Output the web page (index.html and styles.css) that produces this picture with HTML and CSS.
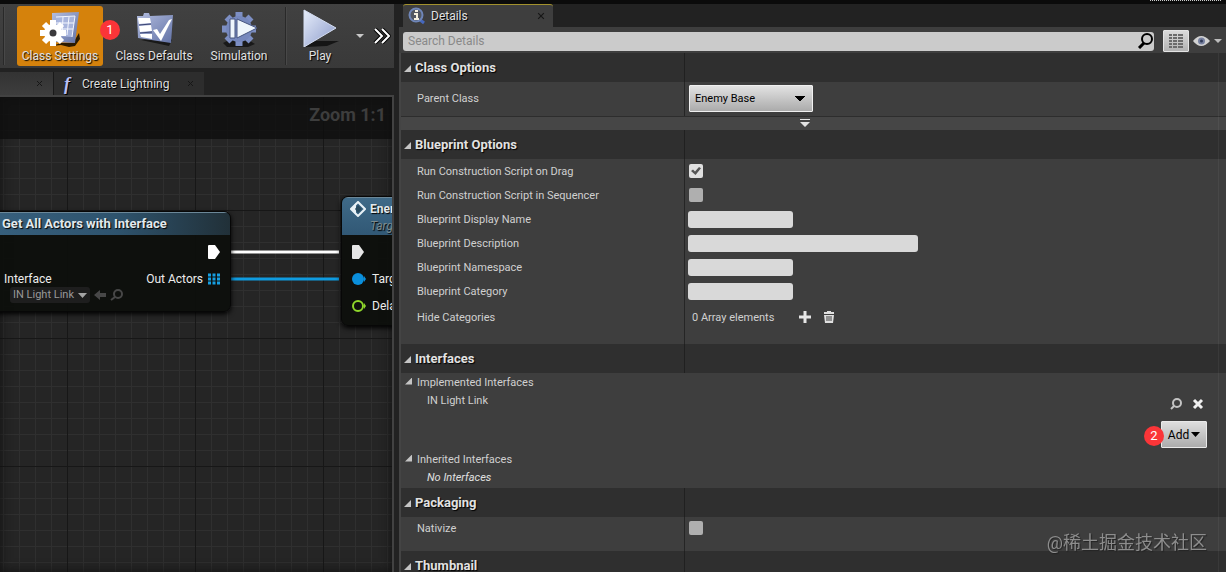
FILE: index.html
```html
<!DOCTYPE html>
<html lang="en">
<head>
    <meta charset="UTF-8">
    <meta name="viewport" content="width=device-width, initial-scale=1.0">
    <title>Blueprint Editor</title>
    <link rel="stylesheet" href="styles.css">
</head>
<body>
    <div class="editor">
        <main class="workspace">
            <div class="toolbar">
                <span class="divider first"></span>
                <button type="button" class="tool active">
                    <svg width="42" height="38" viewBox="0 0 42 38">
                        <defs>
                            <linearGradient id="steel" x1="0" y1="0" x2="1" y2="1">
                                <stop offset="0" stop-color="#e6edfa"/>
                                <stop offset="1" stop-color="#8b9aca"/>
                            </linearGradient>
                            <linearGradient id="card" x1="0" y1="0" x2="1" y2="1">
                                <stop offset="0" stop-color="#b3bddf"/>
                                <stop offset="1" stop-color="#6272a6"/>
                            </linearGradient>
                        </defs>
                        <path d="M13 37l9-3 12 0 6-10 1 6-5 7-6 1-8-2z" fill="#2b1a00"/>
                        <path d="M13 4l27-1-4 31-23-1z" fill="url(#card)"/>
                        <path d="M17 8l19-1-3 21-14-1z" fill="#a8b5dd"/>
                        <path d="M17 8l19-1-3 21M24 8l-1 18M30 8l-2 18M17 14h18M22 20h12" fill="none" stroke="#f4f7ff"/>
                        <path d="M14 11v26M1 24h26M5 15l18 18M23 15L5 33" stroke="#fff" stroke-width="6"/>
                        <circle cx="14" cy="24" r="9" fill="#fff"/>
                        <circle cx="14" cy="24" r="3.5" fill="#3b3a3c"/>
                    </svg>
                    <span>Class Settings</span>
                </button>
                <button type="button" class="tool">
                    <svg width="42" height="38" viewBox="0 0 42 38">
                        <path d="M8 31l28 6 3-6-4-4z" fill="#191919"/>
                        <path d="M4 7h6l1-3h5l1 3 23-1-2 28-33-5z" fill="url(#card)"/>
                        <path d="M5 9h12l1 5-12 1zM6 17l12-1 1 6-12 1zM7 25h12v5l-11-2z" fill="#fff"/>
                        <path d="M6 16l12-1M7 24l12-1" stroke="#3c4674"/>
                        <path d="M20 21l4-1 3 5 9-14 3-1-11 22z" fill="#fff"/>
                    </svg>
                    <span>Class Defaults</span>
                </button>
                <button type="button" class="tool narrow">
                    <svg width="42" height="38" viewBox="0 0 42 38">
                        <path d="M5 34l10-5 14 1 8 5-7 3H9z" fill="#191919"/>
                        <path d="M21 3v34M4 20h34M9 8l24 24M33 8L9 32" stroke="#7d8fc4" stroke-width="7"/>
                        <circle cx="21" cy="20" r="13" fill="#7688bd"/>
                        <path d="M12 10h5v19h-5zM19 10l20 9-20 10z" fill="#eef5fc" stroke="#46547f"/>
                    </svg>
                    <span>Simulation</span>
                </button>
                <span class="divider"></span>
                <button type="button" class="tool play">
                    <svg width="42" height="38" viewBox="0 0 42 38">
                        <path d="M6 38l8-6h26l-12 5z" fill="#151515"/>
                        <path d="M5 1l32 18L5 38z" fill="url(#steel)" stroke="#d5def2"/>
                    </svg>
                    <span>Play</span>
                </button>
                <button type="button" class="icon-button caret" aria-label="Play options">
                    <svg width="10" height="6" viewBox="0 0 10 6"><path d="M1 1h8L5 5z" fill="#c8c8c8"/></svg>
                </button>
                <button type="button" class="icon-button" aria-label="More tools">
                    <svg width="18" height="16" viewBox="0 0 18 16"><path d="M2 1l7 7-7 7M9 1l7 7-7 7" fill="none" stroke="#000" stroke-width="4"/><path d="M2 1l7 7-7 7M9 1l7 7-7 7" fill="none" stroke="#fff" stroke-width="2"/></svg>
                </button>
                <span class="badge badge-one">1</span>
            </div>

            <div class="graph-tabs">
                <div class="graph-tab current">
                    <svg class="close" width="7" height="7" viewBox="0 0 7 7"><path d="M1 1l5 5M6 1L1 6"/></svg>
                </div>
                <div class="graph-tab">
                    <span class="function-icon">f</span>
                    <span class="graph-tab-name">Create Lightning</span>
                    <svg class="close" width="7" height="7" viewBox="0 0 7 7"><path d="M1 1l5 5M6 1L1 6"/></svg>
                </div>
            </div>

            <div class="graph">
                <div class="graph-title">Zoom 1:1</div>

                <svg class="wires" width="120" height="60" viewBox="0 0 120 60">
                    <path d="M4 14h108" stroke="#fff" stroke-width="3"/>
                    <path d="M4 41h108" stroke="#0f9be0" stroke-width="3"/>
                </svg>

                <section class="node node-get">
                    <header class="node-header">Get All Actors with Interface</header>
                    <div class="pins">
                        <div class="pin-row end">
                            <svg width="12" height="14" viewBox="0 0 12 14"><path d="M1 0h6l5 7-5 7H1q-1 0-1-1V1q0-1 1-1z" fill="#fff"/></svg>
                        </div>
                        <div class="pin-row">
                            <span>Interface</span>
                            <span class="pin-out">Out Actors
                                <svg width="12" height="12" viewBox="0 0 12 12"><path d="M0 2h12M0 6h12M0 10h12" stroke="#169fe2" stroke-width="3" stroke-dasharray="3 1.5"/></svg>
                            </span>
                        </div>
                        <div class="pin-value">
                            <button type="button" class="class-pick">IN Light Link
                                <svg width="9" height="5" viewBox="0 0 9 5"><path d="M0 0h9L4.500 5z" fill="#a5a5a5"/></svg>
                            </button>
                            <svg width="12" height="10" viewBox="0 0 12 10"><path d="M0 5l6-5v3h6v4H6v3z" fill="#474747"/></svg>
                            <svg width="13" height="12" viewBox="0 0 13 12"><circle cx="8" cy="5" r="4" fill="none" stroke="#474747" stroke-width="2"/><path d="M5 8l-4 3" stroke="#474747" stroke-width="2"/></svg>
                        </div>
                    </div>
                </section>

                <section class="node node-enemy">
                    <header class="node-header">
                        <svg width="16" height="16" viewBox="0 0 16 16"><path d="M6 2L1 8l5 6z" fill="#e8f1f6"/><path d="M8 1l7 7-7 7-7-7z" fill="none" stroke="#e8f1f6" stroke-width="2"/><path d="M8 4l4 4-4 4-3-4z" fill="#294b60"/></svg>
                        <div>
                            <div>Enemy</div>
                            <div class="node-target">Target</div>
                        </div>
                    </header>
                    <div class="pins">
                        <div class="pin-row"><svg width="14" height="14" viewBox="0 0 14 14"><path d="M1 0h6l5 7-5 7H1q-1 0-1-1V1q0-1 1-1z" fill="#e6e6e6"/></svg></div>
                        <div class="pin-row"><svg width="14" height="12" viewBox="0 0 14 12"><circle cx="6" cy="6" r="6" fill="#0a8fdc"/><path d="M12 3l2 3-2 3z" fill="#0a8fdc"/></svg><span>Target</span></div>
                        <div class="pin-row"><svg width="14" height="12" viewBox="0 0 14 12"><circle cx="6" cy="6" r="5" fill="none" stroke="#8fd62b" stroke-width="2"/><path d="M12 3l2 3-2 3z" fill="#8fd62b"/></svg><span>Delay</span></div>
                    </div>
                </section>
            </div>
        </main>

        <aside class="details">
            <div class="panel-tabs">
                <div class="panel-tab">
                    <svg width="18" height="18" viewBox="0 0 18 18"><path d="M11 12l5 4" stroke="#4668bd" stroke-width="3"/><circle cx="8" cy="8" r="6.500" fill="#525861" stroke="#6f86b8" stroke-width="2"/><path d="M7 4h3M6 7h3v5M6 12h5" fill="none" stroke="#f4f0df" stroke-width="2"/></svg>
                    <span>Details</span>
                    <svg class="close" width="8" height="8" viewBox="0 0 7 7"><path d="M1 1l5 5M6 1L1 6"/></svg>
                </div>
                <span class="window-grip"></span>
            </div>

            <div class="search-bar">
                <div class="search-box">
                    <input type="search" placeholder="Search Details" aria-label="Search Details">
                    <svg width="16" height="16" viewBox="0 0 16 16"><circle cx="10" cy="6" r="5" fill="none" stroke="#000" stroke-width="2"/><path d="M7 10l-5 5" stroke="#000" stroke-width="3"/></svg>
                </div>
                <button type="button" class="matrix" aria-label="Property matrix">
                    <svg width="14" height="14" viewBox="0 0 14 14"><path d="M0 1h14M0 4h14M0 7h14M0 10h14M0 13h14" stroke="#6c6c6c" stroke-width="2" stroke-dasharray="3 1 4 1 5 0"/></svg>
                </button>
                <button type="button" class="icon-button view" aria-label="View options">
                    <svg width="30" height="12" viewBox="0 0 30 12"><path d="M0 6q8-10 17 0-9 10-17 0z" fill="#d2d2d2"/><circle cx="8.500" cy="6" r="3.500" fill="#7781a0"/><circle cx="8.500" cy="6" r="1.500" fill="#303a58"/><path d="M21 4h8l-4 4z" fill="#bdbdbd"/></svg>
                </button>
            </div>

            <div class="categories">
                <h2 class="category"><button type="button">Class Options</button></h2>
                <div class="rows class-rows">
                    <div class="row tall">
                        <label for="parent">Parent Class</label>
                        <div class="value">
                            <select id="parent"><option>Enemy Base</option></select>
                        </div>
                    </div>
                </div>
                <button type="button" class="expander" aria-label="Show advanced">
                    <svg width="10" height="8" viewBox="0 0 10 8"><path d="M0 0h10v1H0zM0 3h10L5 8z" fill="#e4e4e4"/></svg>
                </button>

                <h2 class="category"><button type="button">Blueprint Options</button></h2>
                <div class="rows blueprint-rows">
                    <div class="row"><label for="drag">Run Construction Script on Drag</label><div class="value"><input type="checkbox" id="drag" checked></div></div>
                    <div class="row"><label for="sequencer">Run Construction Script in Sequencer</label><div class="value"><input type="checkbox" id="sequencer"></div></div>
                    <div class="row"><label for="name">Blueprint Display Name</label><div class="value"><input type="text" id="name"></div></div>
                    <div class="row"><label for="description">Blueprint Description</label><div class="value"><input type="text" id="description" class="wide"></div></div>
                    <div class="row"><label for="namespace">Blueprint Namespace</label><div class="value"><input type="text" id="namespace"></div></div>
                    <div class="row"><label for="category">Blueprint Category</label><div class="value"><input type="text" id="category"></div></div>
                    <div class="row array">
                        <span class="label">Hide Categories</span>
                        <div class="value">
                            <span class="label count">0 Array elements</span>
                            <button type="button" class="icon-button" aria-label="Add element"><svg width="12" height="12" viewBox="0 0 12 12"><path d="M6 0v12M0 6h12" stroke="#e6e6e6" stroke-width="3"/></svg></button>
                            <button type="button" class="icon-button" aria-label="Empty array"><svg width="12" height="12" viewBox="0 0 12 12"><path d="M1 2h10M4 1h4" stroke="#e0e0e0" stroke-width="2"/><path d="M1 4h10l-1 8H2z" fill="#e0e0e0"/><path d="M4 5v5M6 5v5M8 5v5" stroke="#3e3e3e"/></svg></button>
                        </div>
                    </div>
                </div>

                <h2 class="category"><button type="button">Interfaces</button></h2>
                <div class="interfaces">
                    <h3><button type="button">Implemented Interfaces</button></h3>
                    <div class="interface-item">
                        <span>IN Light Link</span>
                        <div class="item-tools">
                            <button type="button" class="icon-button" aria-label="Browse"><svg width="12" height="12" viewBox="0 0 12 12"><circle cx="7" cy="5" r="4" fill="none" stroke="#c4c4c4" stroke-width="2"/><path d="M4 8l-3 3" stroke="#c4c4c4" stroke-width="2"/></svg></button>
                            <button type="button" class="icon-button" aria-label="Remove"><svg width="12" height="12" viewBox="0 0 12 12"><path d="M2 2l8 8M10 2l-8 8" stroke="#f0f0f0" stroke-width="3"/></svg></button>
                        </div>
                    </div>
                    <div class="add-line">
                        <button type="button" class="add">Add<svg width="9" height="5" viewBox="0 0 9 5"><path d="M0 0h9L4.500 5z"/></svg><span class="badge badge-two">2</span></button>
                    </div>
                    <h3><button type="button">Inherited Interfaces</button></h3>
                    <div class="none">No Interfaces</div>
                </div>

                <h2 class="category"><button type="button">Packaging</button></h2>
                <div class="rows packaging-rows">
                    <div class="row short"><label for="nativize">Nativize</label><div class="value"><input type="checkbox" id="nativize"></div></div>
                </div>

                <h2 class="category"><button type="button">Thumbnail</button></h2>
            </div>
        </aside>
    </div>
    <div class="watermark">@稀土掘金技术社区</div>
</body>
</html>
```
FILE: styles.css
```css
* {
    box-sizing: border-box;
}

body {
    margin: 0;
    background: #222;
    color: #d0d0d0;
    font-family: Roboto, "Noto Sans CJK SC", sans-serif;
    font-size: 11px;
    line-height: 16px;
    overflow: hidden;
}

button,
input,
select {
    font: inherit;
    color: inherit;
}

button {
    padding: 0;
    border: 0;
    background: none;
}

svg {
    flex: none;
}

h2,
h3 {
    margin: 0;
    font: inherit;
}

.editor {
    display: flex;
    gap: 5px;
    height: 100vh;
    border-top: 4px solid #0b0b0b;
}

.icon-button {
    display: flex;
    align-items: center;
}

.close {
    fill: none;
    stroke: #161616;
}

.badge {
    position: absolute;
    width: 20px;
    height: 20px;
    border-radius: 50%;
    background: #fb3538;
    color: #fff;
    font-size: 13px;
    line-height: 20px;
    text-align: center;
    text-shadow: none;
}

/* left side */
.workspace {
    display: flex;
    flex: 0 0 394px;
    flex-direction: column;
    min-width: 0;
}

.toolbar {
    position: relative;
    display: flex;
    align-items: center;
    gap: 8px;
    height: 64px;
    padding: 0 3px;
    background: linear-gradient(#414141, #393939);
}

.divider {
    width: 2px;
    height: 58px;
    margin-left: 4px;
    border-left: 1px solid #292929;
    background: #484848;
}

.divider.first {
    margin: 0 4px 0 0;
}

.tool {
    display: flex;
    flex: none;
    flex-direction: column;
    align-items: center;
    width: 86px;
    height: 60px;
    padding-top: 3px;
    border-radius: 3px;
    color: #e2e2e2;
    font-size: 12px;
    line-height: 18px;
    text-shadow: 1px 1px 1px #000;
    white-space: nowrap;
}

.tool.active {
    background: #d5820c;
}

.tool.narrow {
    width: 68px;
}

.tool.play {
    width: 50px;
}

.caret {
    margin-left: auto;
}

.badge-one {
    left: 100px;
    top: 16px;
}

.graph-tabs {
    display: flex;
    height: 27px;
    padding-top: 4px;
}

.graph-tab {
    display: flex;
    align-items: center;
    width: 151px;
    padding: 0 10px;
    border-left: 1px solid #191919;
    background: #2d2d2d;
    color: #ddd;
    font-size: 12px;
    text-shadow: 1px 1px 0 #000;
}

.graph-tab.current {
    width: 53px;
    border: 0;
    background: linear-gradient(#333, #3d3d3d);
}

.graph-tab .close {
    margin-left: auto;
}

.function-icon {
    width: 18px;
    color: #b7bff4;
    font: italic bold 18px/20px "Liberation Serif", serif;
}

.graph {
    position: relative;
    flex: 1;
    overflow: hidden;
    border: 2px solid #424242;
    border-width: 2px 2px 0 0;
    background-color: #252525;
    background-image:
        linear-gradient(90deg, #171717 1px, transparent 1px),
        linear-gradient(#171717 1px, transparent 1px),
        linear-gradient(90deg, #2f2f2f 1px, transparent 1px),
        linear-gradient(#2f2f2f 1px, transparent 1px);
    background-size: 128px 128px, 128px 128px, 16px 16px, 16px 16px;
    background-position: 67px 0, 0 113px, 3px 0, 0 1px;
    box-shadow: inset 0 0 12px #111;
}

.graph-title {
    height: 42px;
    padding: 6px 6px;
    background: rgba(14, 14, 14, 0.8);
    color: #3d3d3d;
    font-size: 18px;
    font-weight: bold;
    line-height: 24px;
    text-align: right;
}

.wires {
    position: absolute;
    left: 227px;
    top: 141px;
}

.node {
    position: absolute;
    overflow: hidden;
    border: 1px solid #070707;
    border-radius: 7px;
    background: rgba(13, 15, 12, 0.95);
    box-shadow: 0 2px 5px #000;
    color: #ececec;
    font-size: 12px;
}

.node-get {
    left: -21px;
    top: 114px;
    width: 252px;
    height: 101px;
}

.node-enemy {
    left: 341px;
    top: 99px;
    width: 180px;
    height: 130px;
}

.node-header {
    height: 23px;
    padding-left: 22px;
    border-top: 1px solid #6b8798;
    background: linear-gradient(90deg, #38617f, #2e536d 55%, #213038);
    color: #e2e9ed;
    font-size: 13px;
    font-weight: bold;
    line-height: 22px;
    text-shadow: 1px 1px 1px #000;
}

.node-enemy .node-header {
    display: flex;
    gap: 4px;
    height: 38px;
    padding: 3px 8px;
    background: linear-gradient(#3f6a88, #315875);
    font-size: 12px;
    line-height: 17px;
}

.node-target {
    color: #7b8b8e;
    font-style: italic;
    font-weight: normal;
}

.pins {
    display: flex;
    flex-direction: column;
    padding: 3px 10px 0 24px;
}

.pin-row {
    display: flex;
    align-items: center;
    justify-content: space-between;
    height: 27px;
}

.pin-row.end {
    justify-content: flex-end;
}

.pin-out {
    display: flex;
    align-items: center;
    gap: 5px;
}

.pin-value {
    display: flex;
    align-items: center;
    gap: 4px;
    padding-left: 6px;
    margin-top: -5px;
    color: #999;
    font-size: 11px;
}

.class-pick {
    display: flex;
    align-items: center;
    gap: 4px;
    padding: 0 3px;
    border-radius: 3px;
    background: #1e1e1e;
}

.node-enemy .pins {
    padding-left: 10px;
}

.node-enemy .pin-row {
    justify-content: flex-start;
    gap: 6px;
}

/* details panel */
.details {
    display: flex;
    flex: 1;
    flex-direction: column;
    min-width: 0;
}

.panel-tabs {
    position: relative;
    display: flex;
    height: 23px;
    padding-left: 4px;
}

.panel-tab {
    display: flex;
    align-items: center;
    gap: 8px;
    width: 150px;
    padding: 0 8px 0 5px;
    border-top: 1px solid #a2912d;
    border-radius: 3px 3px 0 0;
    background: #3e3e3e;
    color: #e0e0e0;
    font-size: 12px;
    text-shadow: 1px 1px 0 #000;
}

.panel-tab span {
    margin-left: -3px;
}

.panel-tab .close {
    margin-left: auto;
}

/* dotted strip on the window frame above the panel */
.window-grip {
    position: absolute;
    top: -4px;
    right: 4px;
    width: 72px;
    height: 1px;
    background: repeating-linear-gradient(90deg, #ccc 0 1px, #111 1px 2px);
}

.search-bar {
    display: flex;
    align-items: center;
    height: 26px;
    padding: 2px 3px 0 4px;
    background: #3e3e3e;
}

.search-box {
    display: flex;
    flex: 1;
    align-items: center;
    height: 19px;
    padding: 0 1px 0 5px;
    border-radius: 3px;
    background: #cbcbcb;
}

.search-box input {
    flex: 1;
    min-width: 0;
    padding: 0;
    border: 0;
    outline: 0;
    background: none;
    color: #222;
    font-size: 12px;
}

.search-box input::placeholder {
    color: #898989;
}

.matrix {
    display: flex;
    align-items: center;
    justify-content: center;
    width: 26px;
    height: 22px;
    margin: 0 4px 0 9px;
    border: 1px solid #e4e4e4;
    border-radius: 1px;
    background: linear-gradient(#dadada, #b2b2b2);
}

.categories {
    position: relative;
    flex: 1;
    min-height: 0;
    overflow: hidden;
    padding-left: 2px;
    background: linear-gradient(90deg, #444 2px, #3e3e3e 2px);
}

/* edge of the scrollbar track */
.categories::after {
    content: "";
    position: absolute;
    inset: 0 7px 0 auto;
    width: 1px;
    background: rgba(255, 255, 255, 0.05);
}

.category {
    height: 29px;
    background: linear-gradient(90deg, transparent 283px, #202020 283px, #202020 284px, transparent 284px) #2f2f2f;
}

.category button,
.interfaces h3 button {
    display: flex;
    align-items: center;
    width: 100%;
    height: 100%;
    padding-left: 3px;
    gap: 4px;
    color: #e2e2e2;
    font-size: 13px;
    font-weight: bold;
    text-shadow: 1px 1px 1px #000;
}

.category button::before,
.interfaces h3 button::before {
    content: "";
    width: 7px;
    height: 7px;
    margin-top: 2px;
    background: #c5c5c5;
    clip-path: polygon(100% 0, 100% 100%, 0 100%);
}

.rows {
    background: linear-gradient(90deg, transparent 283px, #252525 283px, #252525 284px, transparent 284px);
}

.class-rows {
    height: 34px;
}

.blueprint-rows {
    height: 185px;
}

.packaging-rows {
    height: 34px;
}

.row {
    display: grid;
    grid-template-columns: 271px 1fr;
    align-items: center;
    height: 24px;
    padding-left: 16px;
}

.row.tall {
    height: 32px;
}

.row.array {
    height: 28px;
}

.row.short {
    height: 22px;
}

.row label,
.row .label {
    padding-top: 2px;
}

.value {
    display: flex;
    align-items: center;
}

select {
    appearance: none;
    width: 124px;
    height: 27px;
    margin-left: 1px;
    padding: 1px 5px 0;
    border: 1px solid #f0f0f0;
    border-radius: 1px;
    background:
        linear-gradient(to bottom right, #000 50%, transparent 50%) right 7px center / 5px 5px no-repeat,
        linear-gradient(to bottom left, #000 50%, transparent 50%) right 12px center / 5px 5px no-repeat,
        linear-gradient(#e2e2e2, #ababab);
    color: #000;
}

input[type="text"] {
    width: 105px;
    height: 17px;
    padding: 0 4px;
    border: 0;
    border-radius: 3px;
    background: #d9d9d9;
    color: #111;
}

input[type="text"].wide {
    width: 230px;
}

input[type="checkbox"] {
    appearance: none;
    display: grid;
    place-items: center;
    width: 14px;
    height: 14px;
    margin: 0 1px;
    border-radius: 2px;
    background: #afafaf;
}

input[type="checkbox"]:checked {
    background: #e0e0e0;
}

input[type="checkbox"]:checked::before {
    content: "";
    width: 10px;
    height: 8px;
    background: #555;
    clip-path: polygon(0 50%, 20% 30%, 40% 55%, 80% 0, 100% 15%, 45% 100%);
}

.count {
    margin: 0 13px 0 4px;
}

.value .icon-button {
    margin-left: 12px;
}

.expander {
    display: flex;
    align-items: flex-start;
    justify-content: center;
    width: 100%;
    height: 14px;
    padding: 2px 17px 0 0;
    border-top: 1px solid #2d2d2d;
    background: #464646;
}

.interfaces {
    height: 115px;
    padding-top: 1px;
}

.interfaces h3 {
    height: 18px;
}

.interfaces h3 button {
    padding-left: 4px;
    gap: 5px;
    color: inherit;
    font-size: 11px;
    font-weight: normal;
    text-shadow: none;
}

.interfaces h3 button::before {
    margin: 0 0 4px;
}

.interface-item {
    display: flex;
    justify-content: space-between;
    height: 26px;
    padding: 1px 22px 3px 26px;
}

.item-tools {
    display: flex;
    align-items: center;
    gap: 10px;
}

.add-line {
    display: flex;
    justify-content: flex-end;
    height: 33px;
    padding: 3px 19px 3px 0;
}

.add {
    position: relative;
    display: flex;
    align-items: center;
    justify-content: center;
    gap: 2px;
    width: 46px;
    height: 27px;
    border: 1px solid #e9e9e9;
    border-radius: 1px;
    background: linear-gradient(#dedede, #acacac);
    color: #000;
    font-size: 12px;
}

.badge-two {
    left: -18px;
    top: 4px;
}

.none {
    padding: 1px 26px;
    color: #e0e0e0;
    font-style: italic;
}

.watermark {
    position: fixed;
    right: 19px;
    bottom: 16px;
    color: #8d8d8d;
    font-size: 18px;
    line-height: 26px;
    text-shadow: 1px 1px 1px #222;
}
```
